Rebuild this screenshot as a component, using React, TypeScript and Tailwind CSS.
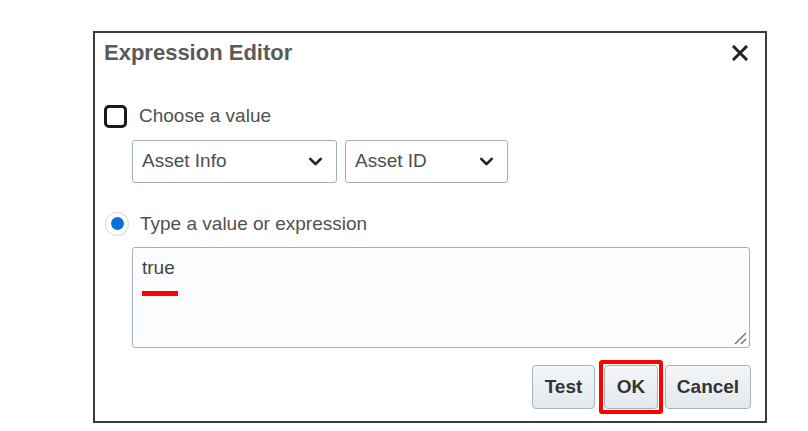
import { ChevronDown } from "lucide-react";

function Select({ label, className }: { label: string; className: string }) {
  return (
    <div
      className={
        "flex h-[43px] items-center justify-between rounded-[3px] border border-[#9fb0bd] bg-white pl-[9px] pr-[10px] " +
        className
      }
    >
      <span className="text-[19px] text-[#4d4d4d]">{label}</span>
      <ChevronDown className="h-[21px] w-[21px] text-[#222]" strokeWidth={3} />
    </div>
  );
}

function Button({ children, className = "" }: { children: React.ReactNode; className?: string }) {
  return (
    <button
      className={
        "flex h-[44px] items-center justify-center rounded-[4px] border border-[#a6b4c0] bg-gradient-to-b from-[#f4f6f8] to-[#e3e8ec] text-[19px] font-bold text-[#333] " +
        className
      }
    >
      {children}
    </button>
  );
}

export default function App() {
  return (
    <div className="h-[431px] w-[808px] bg-white pl-[93px] pt-[31px] font-['Liberation_Sans',Arial,sans-serif]">
      <div className="flex h-[392px] w-[674px] flex-col border-2 border-[#3c3c3c] bg-white">
        {/* header */}
        <div className="flex h-[38px] items-center justify-between pl-[9px] pr-[17px]">
          <span className="text-[22px] font-bold text-[#5a5a5a]">Expression Editor</span>
          <svg width="16" height="16" viewBox="0 0 16 16" className="mt-[1px]">
            <path d="M2 2 L14 14 M14 2 L2 14" stroke="#222" strokeWidth="3" strokeLinecap="square" />
          </svg>
        </div>

        {/* choose a value */}
        <div className="mt-[31px] flex items-center gap-[12px] pl-[9px]">
          <div className="h-[23px] w-[23px] rounded-[5px] border-[3px] border-[#1a1a1a] bg-white" />
          <span className="text-[19px] text-[#505050]">Choose a value</span>
        </div>

        <div className="mt-[9px] flex gap-[8px] pl-[37px]">
          <Select label="Asset Info" className="w-[205px]" />
          <Select label="Asset ID" className="w-[163px]" />
        </div>

        {/* type a value */}
        <div className="mt-[27px] flex items-center gap-[11px] pl-[10px]">
          <div className="flex h-[24px] w-[24px] items-center justify-center rounded-full border-[1.5px] border-[#cfd6dc] bg-white">
            <div className="h-[13px] w-[13px] rounded-full bg-[#0b6fd6]" />
          </div>
          <span className="text-[19px] text-[#505050]">Type a value or expression</span>
        </div>

        <div className="relative ml-[37px] mt-[9px] h-[101px] w-[618px] rounded-[3px] border-[1.5px] border-[#a3b0bb] bg-[#fbfcfd] pl-[9px] pt-[9px]">
          <span className="text-[19px] leading-[20px] text-[#444]">true</span>
          <div className="mt-[10px] h-[5px] w-[36px] bg-[#ff0000]" />
          <svg width="15" height="15" viewBox="0 0 15 15" className="absolute bottom-[2px] right-[2px]">
            <path d="M14 3 L3 14 M14 9 L9 14" stroke="#6b6b6b" strokeWidth="1.3" />
          </svg>
        </div>

        {/* buttons */}
        <div className="mt-[12px] flex items-center justify-end gap-[2px] pr-[14px]">
          <Button className="w-[63px]">Test</Button>
          <div className="ml-[2px] rounded-[3px] border-[4px] border-[#ff0000] p-px">
            <Button className="h-[42px] w-[54px]">OK</Button>
          </div>
          <Button className="w-[86px]">Cancel</Button>
        </div>
      </div>
    </div>
  );
}
